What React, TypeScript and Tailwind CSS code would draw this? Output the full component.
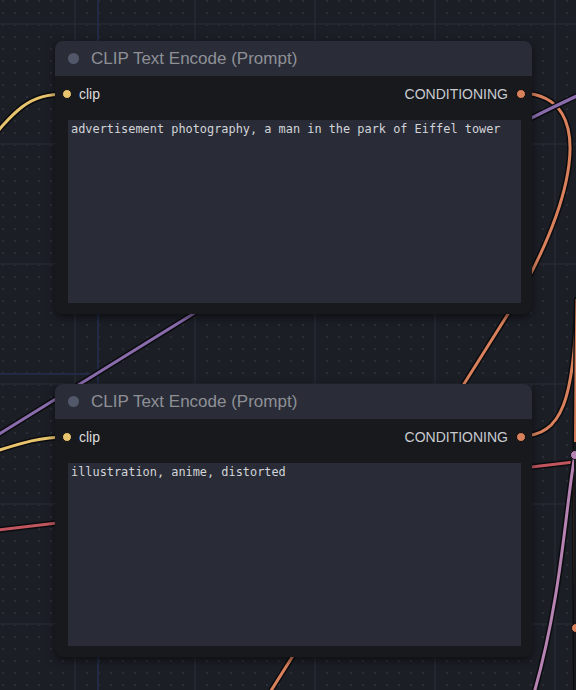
import React from "react";

type Wire = { d: string; color: string };

const wires: Wire[] = [
  { d: "M-30,165 C15,110 25,94 67,94", color: "#e9c46e" },
  { d: "M-40,462 C10,448 30,437 67,437", color: "#e9c46e" },
  { d: "M-10,531 L590,460", color: "#c2565f" },
  { d: "M521,93 C602,95 572,210 508,314 L262,705", color: "#d9805c" },
  { d: "M521,436 C562,436 574,400 577,300", color: "#d9805c" },
  { d: "M577,300 C575,420 575,560 576,700", color: "#d9805c" },
  { d: "M640,70 C560,95 300,240 193,314 L-30,452", color: "#8a6cad" },
  { d: "M575,455 C566,500 562,600 532,700", color: "#b683b3" },
];

function Wires() {
  return (
    <svg className="absolute inset-0" width={576} height={690} viewBox="0 0 576 690" fill="none">
      {wires.map((w, i) => (
        <g key={i}>
          <path d={w.d} stroke="#0b0c0f" strokeWidth={6} strokeLinecap="round" />
          <path d={w.d} stroke={w.color} strokeWidth={3} strokeLinecap="round" />
        </g>
      ))}
    </svg>
  );
}

function Dot({ color }: { color: string }) {
  return <span className="block size-[10px] shrink-0 rounded-full border border-[#0d0e11]" style={{ background: color }} />;
}

function ClipNode({ top, text }: { top: string; text: string }) {
  return (
    <div
      className={`absolute left-[55px] ${top} flex h-[273px] w-[477px] flex-col overflow-hidden rounded-[8px] bg-[#17191d] shadow-[0_3px_8px_rgba(0,0,0,0.55)]`}
    >
      <div className="flex h-[35px] shrink-0 items-center gap-[12px] bg-[#2a2d37] pl-[13px]">
        <span className="block size-[11px] rounded-full bg-[#525869]" />
        <span className="text-[17px] leading-none text-[#8e9096] [font-family:'Liberation_Sans',Arial,sans-serif]">
          CLIP Text Encode (Prompt)
        </span>
      </div>
      <div className="flex h-[36px] shrink-0 items-center justify-between pl-[7px] pr-[6px] text-[14px] leading-none [font-family:'Liberation_Sans',Arial,sans-serif]">
        <div className="flex items-center gap-[7px]">
          <Dot color="#e9c46e" />
          <span className="text-[#dcdcde]">clip</span>
        </div>
        <div className="flex items-center gap-[8px]">
          <span className="text-[#c9cbd0]">CONDITIONING</span>
          <Dot color="#d9805c" />
        </div>
      </div>
      <div className="ml-[13px] mt-[8px] h-[183px] w-[453px] bg-[#292c36] px-[3px] pt-[1px] text-[11.9px] leading-[16px] text-[#d2d4d9] [font-family:'DejaVu_Sans_Mono',monospace]">
        {text}
      </div>
    </div>
  );
}

export default function App() {
  return (
    <div className="relative h-[690px] w-[576px] overflow-hidden bg-[#1b1e25]">
      <div className="absolute inset-0 bg-[radial-gradient(circle,#2a2d36_1px,transparent_1.6px)] bg-[length:12px_12px] bg-[position:9px_7px]" />
      <div className="absolute inset-0 bg-[linear-gradient(to_right,#23262e_2px,transparent_2px)] bg-[length:120px_120px] bg-[position:74px_0]" />
      <div className="absolute inset-0 bg-[linear-gradient(to_bottom,#23262e_2px,transparent_2px)] bg-[length:120px_120px] bg-[position:0_23px]" />
      <div className="absolute left-[97px] top-0 h-full w-[2px] bg-[#212a44]" />
      <div className="absolute left-0 top-[373px] h-[2px] w-[98px] bg-[#212a44]" />

      <Wires />

      <div className="absolute left-[574px] top-[442px] h-[260px] w-[20px] bg-[#17191d]" />
      <div className="absolute left-[570px] top-[450px]">
        <Dot color="#b683b3" />
      </div>
      <div className="absolute left-[571px] top-[623px]">
        <Dot color="#d9805c" />
      </div>

      <ClipNode top="top-[41px]" text="advertisement photography, a man in the park of Eiffel tower" />
      <ClipNode top="top-[384px]" text="illustration, anime, distorted" />
    </div>
  );
}
